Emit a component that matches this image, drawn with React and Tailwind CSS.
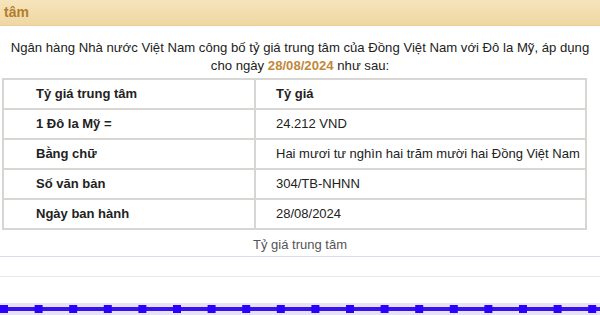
import React from 'react'

const rows = [
    ["Tỷ giá trung tâm", "Tỷ giá", true],
    ["1 Đô la Mỹ =", "24.212 VND"],
    ["Bằng chữ", "Hai mươi tư nghìn hai trăm mười hai Đồng Việt Nam"],
    ["Số văn bản", "304/TB-NHNN"],
    ["Ngày ban hành", "28/08/2024"],
]

const DottedLine = () => {
    const squares = []
    for (let x = 0; x < 600; x += 34.6) squares.push(x)
    return (
        <svg width="600" height="14" viewBox="0 0 600 14" className="block">
            <rect x="0" y="1" width="600" height="12" fill="#e6e4f4" />
            <rect x="0" y="5" width="600" height="4" fill="#3a10f0" />
            {squares.map((x, i) => (
                <rect key={i} x={x} y="3" width="8" height="8" fill="#2a00ff" />
            ))}
        </svg>
    )
}

const App = () => {
    return (
        <div className="w-[600px] h-[315px] overflow-hidden bg-white font-['Liberation_Sans',Arial,sans-serif] text-[13px] text-[#222]">
            <div className="h-[26px] bg-gradient-to-b from-[#f6e4bb] to-[#efd7a2] border-b border-[#e8cf98] px-[4px] flex items-center">
                <span className="font-bold text-[#b37d2c] text-[14px]">tâm</span>
            </div>
            <p className="mt-[13px] text-center text-[13.15px] leading-[18px] px-[4px]">
                Ngân hàng Nhà nước Việt Nam công bố tỷ giá trung tâm của Đồng Việt Nam với Đô la Mỹ, áp dụng cho ngày{' '}
                <span className="font-bold text-[#bf883a]">28/08/2024</span> như sau:
            </p>
            <table className="mt-[3px] ml-[2px] w-[585px] border-collapse">
                <tbody>
                    {rows.map(([a, b, head], i) => (
                        <tr key={i} className="h-[30px]">
                            <td className="w-[252px] border-2 border-[#d8d6d2] pl-[32px] font-bold">{a}</td>
                            <td className={`border-2 border-[#d8d6d2] pl-[20px] ${head ? 'font-bold' : ''}`}>{b}</td>
                        </tr>
                    ))}
                </tbody>
            </table>
            <div className="mt-[7px] text-center text-[#555] leading-[16px]">Tỷ giá trung tâm</div>
            <div className="mt-[3px] h-[1px] bg-[#dcdae8]" />
            <div className="mt-[19px] h-[1px] bg-[#e8e7ee]" />
            <div className="mt-[25px]">
                <DottedLine />
            </div>
        </div>
    )
}

export default App
